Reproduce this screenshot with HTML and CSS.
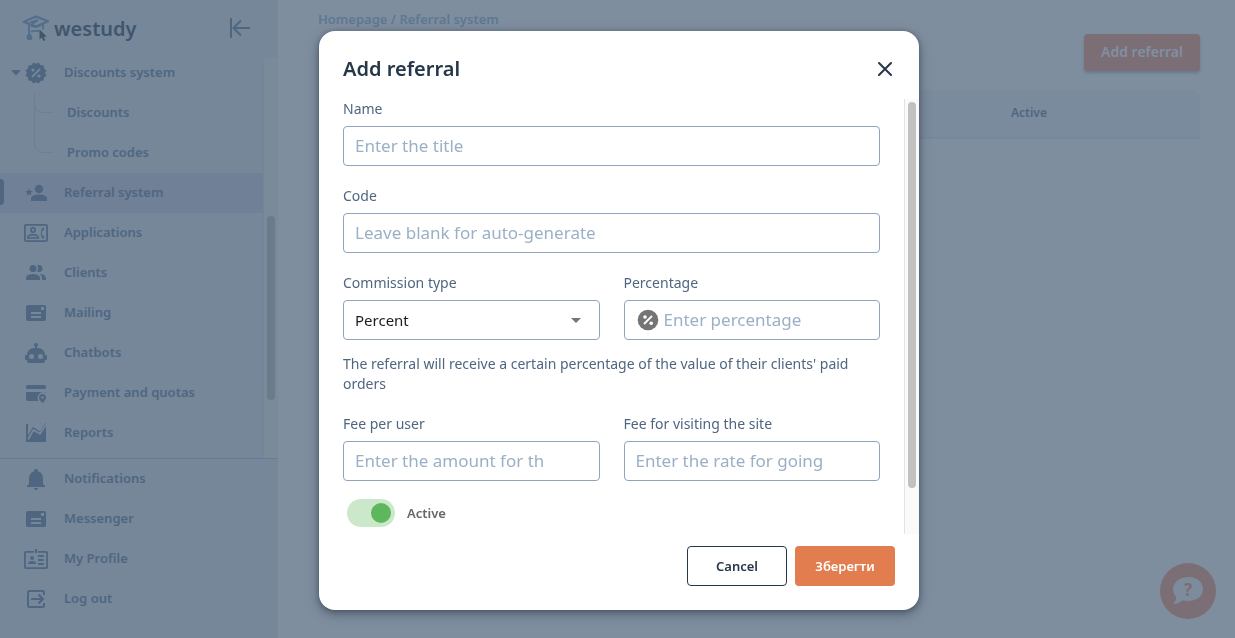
FILE: index.html
```html
<!DOCTYPE html>
<html lang="en">
<head>
<meta charset="utf-8">
<meta name="viewport" content="width=device-width, initial-scale=1">
<title>Referral system</title>
<link rel="stylesheet" href="styles.css">
</head>
<body>
<div class="app">
  <aside class="sidebar">
    <div class="sidebar-head">
      <a class="brand" href="#">
        <svg class="brand-mark" viewBox="0 0 28 28" aria-hidden="true">
          <path d="M1.5 7.8 14 2.5l12 4.8-12 5.200z" fill="none" stroke="#526e8b" stroke-width="2" stroke-linejoin="round"/>
          <path d="M8 8.500l8-2.500M16 6l-6 4M21 9.500v6M7 11v12M9 18c3-2 5-1 8-1M9 12c3 1 7 1 10-1" fill="none" stroke="#526e8b" stroke-width="1.8"/>
          <path d="M5 21l4-1 1.500 4-1 2H5.500l-1-2z" fill="#526e8b"/>
          <path d="M17.500 15.500v10l2.300-2 1.500 3.500 2-1-1.500-3.300 3-.2z" fill="#40566d"/>
        </svg>
        <span>westudy</span>
      </a>
      <button class="collapse" type="button" aria-label="Collapse menu">
        <svg viewBox="0 0 22 22"><path d="M2 1v20M21 11H4.500M12 3.500 4.500 11l7.500 7.500" fill="none" stroke="currentColor" stroke-width="2"/></svg>
      </button>
    </div>

    <div class="nav-scroll">
      <nav class="nav">
        <a class="item item-open" href="#">
          <svg class="caret" viewBox="0 0 10 6"><path d="M0 0h10L5 5.500z"/></svg>
          <svg class="icon" viewBox="0 0 24 24"><g><rect x="4.200" y="4.200" width="15.600" height="15.600" rx="1"/><rect x="4.200" y="4.200" width="15.600" height="15.600" rx="1" transform="rotate(30 12 12)"/><rect x="4.200" y="4.200" width="15.600" height="15.600" rx="1" transform="rotate(60 12 12)"/></g><path class="cut-line" d="M8 16l8-8"/><circle class="cut" cx="9" cy="9" r="1.600"/><circle class="cut" cx="15" cy="15" r="1.600"/></svg>
          Discounts system
        </a>
        <div class="subnav">
          <svg class="tree" viewBox="0 0 22 62" aria-hidden="true"><path d="M1.500 0v50q0 9.500 9.500 9.500h10M1.500 10q0 9.500 9.500 9.500h10" fill="none" stroke="#6c8095"/></svg>
          <div class="subnav-links">
            <a class="item subitem" href="#">Discounts</a>
            <a class="item subitem" href="#">Promo codes</a>
          </div>
        </div>
        <a class="item item-active" href="#" aria-current="page">
          <svg class="icon" viewBox="0 0 24 24"><circle cx="15" cy="8" r="4.200"/><path d="M7 20v-2.500c0-2.600 4.500-4 8-4s8 1.400 8 4V20z"/><path d="M5 7.500l1.100 2.500 2.700.2-2.100 1.700.7 2.600L5 13.100l-2.400 1.400.7-2.600-2.100-1.700 2.700-.2z"/></svg>
          Referral system
        </a>
        <a class="item" href="#">
          <svg class="icon" viewBox="0 0 24 24"><rect x=".9" y="3.900" width="22.200" height="16.200" rx="1.200" fill="none" stroke="currentColor" stroke-width="1.800"/><circle cx="9" cy="9" r="2.100" fill="none" stroke="currentColor" stroke-width="1.800"/><path d="M3.800 17v-.6c0-1.800 3-2.800 5.200-2.800s5.200 1 5.200 2.800v.6z" fill="none" stroke="currentColor" stroke-width="1.600"/><path d="M20 7l-1.200-.8c-2.600 3-2.600 8.600 0 11.600L20.500 17l-1.100-2.600-1.400-.1c-.5-1.500-.5-3.100 0-4.600l1.400-.1L20.500 7z"/></svg>
          Applications
        </a>
        <a class="item" href="#">
          <svg class="icon" viewBox="0 0 24 24"><path d="M16 17v2H2v-2s0-4 7-4 7 4 7 4M12.500 7.500A3.500 3.500 0 1 0 9 11a3.500 3.500 0 0 0 3.500-3.500M15.940 13A5.320 5.320 0 0 1 18 17v2h4v-2s0-3.630-6.060-4M15 4a3.390 3.390 0 0 0-1.930.59 5 5 0 0 1 0 5.820A3.390 3.390 0 0 0 15 11a3.500 3.500 0 0 0 0-7z"/></svg>
          Clients
        </a>
        <a class="item" href="#">
          <svg class="icon" viewBox="0 0 24 24"><rect x="2" y="4" width="20" height="16" rx="2"/><path class="cut" d="M7 11h10v2H7zM7 15h10v2H7zM17 6h3v3h-3z"/></svg>
          Mailing
        </a>
        <a class="item" href="#">
          <svg class="icon" viewBox="0 0 24 24"><path d="M12 2a2 2 0 0 1 1 3.730V7h1a7 7 0 0 1 7 7h1a1 1 0 0 1 1 1v3a1 1 0 0 1-1 1h-1v1a2 2 0 0 1-2 2H5a2 2 0 0 1-2-2v-1H2a1 1 0 0 1-1-1v-3a1 1 0 0 1 1-1h1a7 7 0 0 1 7-7h1V5.730A2 2 0 0 1 12 2z"/><circle class="cut" cx="7.500" cy="15.500" r="2.500"/><circle class="cut" cx="16.500" cy="15.500" r="2.500"/></svg>
          Chatbots
        </a>
        <a class="item" href="#">
          <svg class="icon" viewBox="0 0 24 24"><path d="M4 4h16a2 2 0 0 1 2 2v2H2V6a2 2 0 0 1 2-2z"/><path d="M2 11h20v.5a6 6 0 0 0-8.500 5c0 1.200.4 2.400 1 3.500H4a2 2 0 0 1-2-2z"/><path d="M18.500 13a3.500 3.500 0 0 1 3.500 3.500c0 2.500-3.500 5.500-3.500 5.500S15 19 15 16.500a3.500 3.500 0 0 1 3.500-3.500z"/><circle class="cut" cx="18.500" cy="16.500" r="1.200"/></svg>
          Payment and quotas
        </a>
        <a class="item" href="#">
          <svg class="icon" viewBox="0 0 24 24"><path d="M2 3h2v11.500L9 6l7 4.500L21 2.500h1V21H2z"/><path class="cut-line" d="M4 18.500 9.500 9l6.500 3.800L22 3.500"/><path d="M2 3h1.800v18H2z"/></svg>
          Reports
        </a>
      </nav>
      <div class="nav-track"><div class="nav-thumb"></div></div>
    </div>

    <nav class="nav-foot">
      <a class="item" href="#">
        <svg class="icon" viewBox="0 0 24 24"><path d="M12 2a2 2 0 0 1 2 2.200c3 .9 5 3.600 5 6.800v6l2 2v1H3v-1l2-2v-6c0-3.200 2-5.900 5-6.800A2 2 0 0 1 12 2zM10 21h4a2 2 0 0 1-4 0z"/></svg>
        Notifications
      </a>
      <a class="item" href="#">
        <svg class="icon" viewBox="0 0 24 24"><rect x="2" y="4" width="20" height="16" rx="2"/><path class="cut" d="M7 11h10v2H7zM7 15h10v2H7zM17 6h3v3h-3z"/></svg>
        Messenger
      </a>
      <a class="item" href="#">
        <svg class="icon" viewBox="0 0 24 24"><rect x=".9" y="4.900" width="22.200" height="16.200" rx="1.200" fill="none" stroke="currentColor" stroke-width="1.800"/><path class="cut" d="M10 3h4v4h-4z"/><path d="M11 2h2v4h-2zM14 8h6v2h-6zM14 12h6v2h-6zM14 16h6v2h-6zM4 17v-.8c0-1.500 2.200-2.200 4-2.200s4 .7 4 2.200v.8z"/><circle cx="8" cy="11" r="2"/></svg>
        My Profile
      </a>
      <a class="item" href="#">
        <svg class="icon" viewBox="0 0 24 24"><path d="M20 8V5.500A1.500 1.500 0 0 0 18.500 4h-13A1.500 1.500 0 0 0 4 5.500v13A1.500 1.500 0 0 0 5.500 20h13a1.500 1.500 0 0 0 1.500-1.500V16M7 12h12M14.500 7.500 19 12l-4.500 4.500" fill="none" stroke="currentColor" stroke-width="2"/></svg>
        Log out
      </a>
    </nav>
  </aside>

  <main class="main">
    <div class="crumbs"><a href="#">Homepage</a> / <a href="#">Referral system</a></div>
    <div class="actions"><button class="add" type="button">Add referral</button></div>
    <table class="table">
      <thead><tr><th class="col-rest"></th><th class="col-active" scope="col">Active</th></tr></thead>
    </table>
  </main>
  <button class="help" type="button" aria-label="Help">
    <svg viewBox="0 0 32 28" aria-hidden="true"><path d="M16.500 0C25 0 31 5 31 12s-6 12-14.500 12c-2 0-3.800-.3-5.500-.8C8 25.500 5 27 1 27c2-2 3.200-4.500 3.200-7C2.200 17.800 1 15 1 12 1 5 8 0 16.500 0z" fill="#7c8c9d"/></svg>
    <span>?</span>
  </button>
</div>

<div class="backdrop">
  <form class="dialog" role="dialog" aria-modal="true" aria-labelledby="dialog-title">
    <header class="dialog-head">
      <h2 id="dialog-title">Add referral</h2>
      <button class="close" type="button" aria-label="Close">
        <svg viewBox="0 0 14 14"><path d="M1 1l12 12M13 1 1 13" fill="none" stroke="currentColor" stroke-width="2" stroke-linecap="round"/></svg>
      </button>
    </header>
    <div class="dialog-body">
      <div class="fields">
        <div class="field">
          <label for="name">Name</label>
          <input class="control" id="name" type="text" placeholder="Enter the title">
        </div>
        <div class="field">
          <label for="code">Code</label>
          <input class="control" id="code" type="text" placeholder="Leave blank for auto-generate">
        </div>
        <div class="commission">
          <div class="row">
            <div class="field">
              <label for="type">Commission type</label>
              <div class="select-wrap">
                <select class="control" id="type"><option>Percent</option></select>
                <svg class="select-caret" viewBox="0 0 10 5"><path d="M0 0h10L5 5z"/></svg>
              </div>
            </div>
            <div class="field">
              <label for="percentage">Percentage</label>
              <div class="control adorned">
                <svg class="percent" viewBox="0 0 22 22" aria-hidden="true"><circle cx="11" cy="11" r="10.300" fill="#757575"/><path d="M7 15l8-8" stroke="#fff" stroke-width="1.800"/><circle cx="8" cy="8" r="1.800" fill="#fff"/><circle cx="14.200" cy="14.200" r="1.800" fill="#fff"/></svg>
                <input id="percentage" type="text" placeholder="Enter percentage">
              </div>
            </div>
          </div>
          <p class="hint">The referral will receive a certain percentage of the value of their clients' paid orders</p>
        </div>
        <div class="row">
          <div class="field">
            <label for="fee-user">Fee per user</label>
            <input class="control" id="fee-user" type="text" placeholder="Enter the amount for the user">
          </div>
          <div class="field">
            <label for="fee-visit">Fee for visiting the site</label>
            <input class="control" id="fee-visit" type="text" placeholder="Enter the rate for going">
          </div>
        </div>
        <label class="switch"><input type="checkbox" checked>Active</label>
      </div>
      <div class="body-track"><div class="body-thumb"></div></div>
    </div>
    <footer class="dialog-foot">
      <button class="btn btn-outline" type="button">Cancel</button>
      <button class="btn btn-primary" type="submit">Зберегти</button>
    </footer>
  </form>
</div>
</body>
</html>
```

FILE: styles.css
```css
* { box-sizing: border-box; }
body {
  margin: 0;
  background: #7f8e9e;
  color: #4f6681;
  font-family: "Noto Sans", "Open Sans", sans-serif;
  font-size: 13px;
}
a { color: inherit; text-decoration: none; }
button { padding: 0; border: 0; background: none; font: inherit; color: inherit; }
svg { display: block; fill: currentColor; flex: none; }

.app { display: flex; min-height: 100vh; }

.sidebar {
  display: flex;
  flex-direction: column;
  width: 278px;
  height: 100vh;
  flex: none;
  background: #758799;
}
.sidebar-head {
  display: flex;
  align-items: center;
  justify-content: space-between;
  height: 58px;
  padding: 0 27px 2px 22px;
}
.brand {
  display: flex;
  align-items: center;
  gap: 4px;
  color: #40566e;
  font-size: 20px;
  font-weight: 600;
}
.brand-mark { width: 28px; height: 28px; }
.collapse svg { width: 22px; height: 22px; }

.nav-scroll { display: flex; flex: 1; min-height: 0; }
.nav { flex: 1; margin-top: -5px; }
.item {
  display: flex;
  align-items: center;
  gap: 16px;
  height: 40px;
  padding: 0 0 2px 24px;
  font-weight: 600;
}
.icon { width: 24px; height: 24px; margin-top: 2px; }
.cut { fill: #758799; }
.cut-line { fill: none; stroke: #758799; stroke-width: 1.8; }
.item-open { gap: 4px; padding-left: 11px; }
.item-open .icon { margin: 2px 12px 0 -1px; }
.caret { width: 10px; height: 6px; margin-top: 2px; }
.subnav { display: flex; padding-left: 33px; }
.subnav-links { flex: 1; }
.tree { width: 22px; height: 62px; }
.subitem { padding-left: 12px; }
.item-active { padding-left: 0; background: #6f8097; }
.item-active::before {
  content: "";
  width: 4px;
  height: 26px;
  margin-right: 4px;
  border-radius: 0 4px 4px 0;
  background: #4f6580;
}
.nav-track { width: 15px; border-left: 1px solid #73859a; background: #7b8a99; }
.nav-thumb { width: 8px; height: 184px; margin: 158px 0 0 3px; border-radius: 4px; background: #6b7b8b; }
.nav-foot { padding-bottom: 19px; border-top: 1px solid #677b92; }

.main { flex: 1; padding: 9px 35px 0 40px; }
.crumbs { line-height: 20px; font-weight: 600; color: #5e7792; }
.actions { display: flex; justify-content: flex-end; margin-top: 5px; }
.add {
  height: 37px;
  padding: 0 17px 2px;
  border-radius: 4px;
  background: #7c6e75;
  color: #8090a4;
  font-size: 14px;
  font-weight: 600;
  box-shadow: 0 2px 3px #66778c;
}
.table {
  width: 100%;
  margin-top: 19px;
  border-spacing: 0;
  table-layout: fixed;
  border-radius: 10px 10px 0 0;
  background: #7a8b9d;
}
.table th {
  height: 49px;
  padding: 0 0 2px;
  border-bottom: 2px solid #758799;
  font-size: 12px;
  font-weight: 600;
}
.col-active { width: 342px; }

.help {
  position: fixed;
  right: 19px;
  bottom: 19px;
  display: grid;
  place-items: center;
  width: 56px;
  height: 56px;
  border-radius: 50%;
  background: #7c6e75;
  color: #7c6e75;
  font-size: 17px;
  font-weight: 700;
}
.help > * { grid-area: 1 / 1; }
.help svg { width: 32px; height: 28px; }
.help span { margin-bottom: 4px; }

.backdrop {
  position: fixed;
  inset: 0;
  display: grid;
  place-items: center;
  padding: 3px 0 0 3px;
}
.dialog {
  width: 600px;
  max-width: 100%;
  border-radius: 16px;
  background: #fff;
  box-shadow: 0 4px 12px rgba(40, 54, 72, .5), 0 1px 5px rgba(40, 54, 72, .4);
}
.dialog-head {
  display: flex;
  align-items: center;
  justify-content: space-between;
  height: 68px;
  padding: 8px 27px 0 24px;
  color: #26374a;
}
.dialog-head h2 { margin: 0; font-size: 20px; line-height: 28px; font-weight: 600; }
.close svg { width: 14px; height: 14px; }

.dialog-body { display: flex; }
.fields {
  display: flex;
  flex: 1;
  flex-direction: column;
  gap: 20px;
  min-width: 0;
  padding: 0 24px 7px;
}
.row { display: grid; grid-template-columns: 1fr 1fr; gap: 24px; }
.field { display: flex; flex-direction: column; gap: 8px; min-width: 0; font-size: 14px; line-height: 19px; }
.control {
  width: 100%;
  height: 40px;
  padding: 0 54px 2px 11px;
  border: 1px solid #8fa5bf;
  border-radius: 4px;
  background: #fff;
  color: #1d1d1d;
  font-family: inherit;
  font-size: 17px;
}
input::placeholder { color: #9bb0c6; opacity: 1; }
.select-wrap { display: grid; align-items: center; }
.select-wrap > * { grid-area: 1 / 1; }
select.control { padding-bottom: 0; appearance: none; font-size: 15px; }
.select-caret { width: 10px; height: 5px; margin-right: 19px; justify-self: end; fill: #757575; pointer-events: none; }
.adorned { display: flex; align-items: center; gap: 5px; padding: 0 12px; }
.adorned input { flex: 1; min-width: 0; padding: 0 0 2px; border: 0; outline: 0; font: inherit; }
.percent { width: 22px; height: 22px; }
.hint { margin: 14px 0 0; font-size: 14px; line-height: 20px; }

.switch {
  display: flex;
  align-items: center;
  gap: 12px;
  margin: -2px 0 0 4px;
  color: #666;
  font-weight: 600;
}
.switch input {
  display: flex;
  align-items: center;
  justify-content: flex-end;
  width: 48px;
  height: 28px;
  margin: 0;
  padding: 4px;
  border-radius: 14px;
  background: #cbe8ca;
  appearance: none;
}
.switch input::before { content: ""; width: 20px; height: 20px; border-radius: 50%; background: #5fb75d; }

.body-track { width: 15px; padding: 3px; border-left: 1px solid #e4e4e4; background: #fafafa; }
.body-thumb { width: 8px; height: 90%; border-radius: 4px; background: #c1c1c1; }

.dialog-foot { display: flex; justify-content: flex-end; gap: 8px; padding: 12px 24px 24px; }
.btn { width: 100px; height: 40px; padding-bottom: 1px; border-radius: 4px; font-weight: 600; }
.btn-outline { border: 1px solid #26374a; color: #26374a; }
.btn-primary { background: #e17d4f; color: #fff; }
```
